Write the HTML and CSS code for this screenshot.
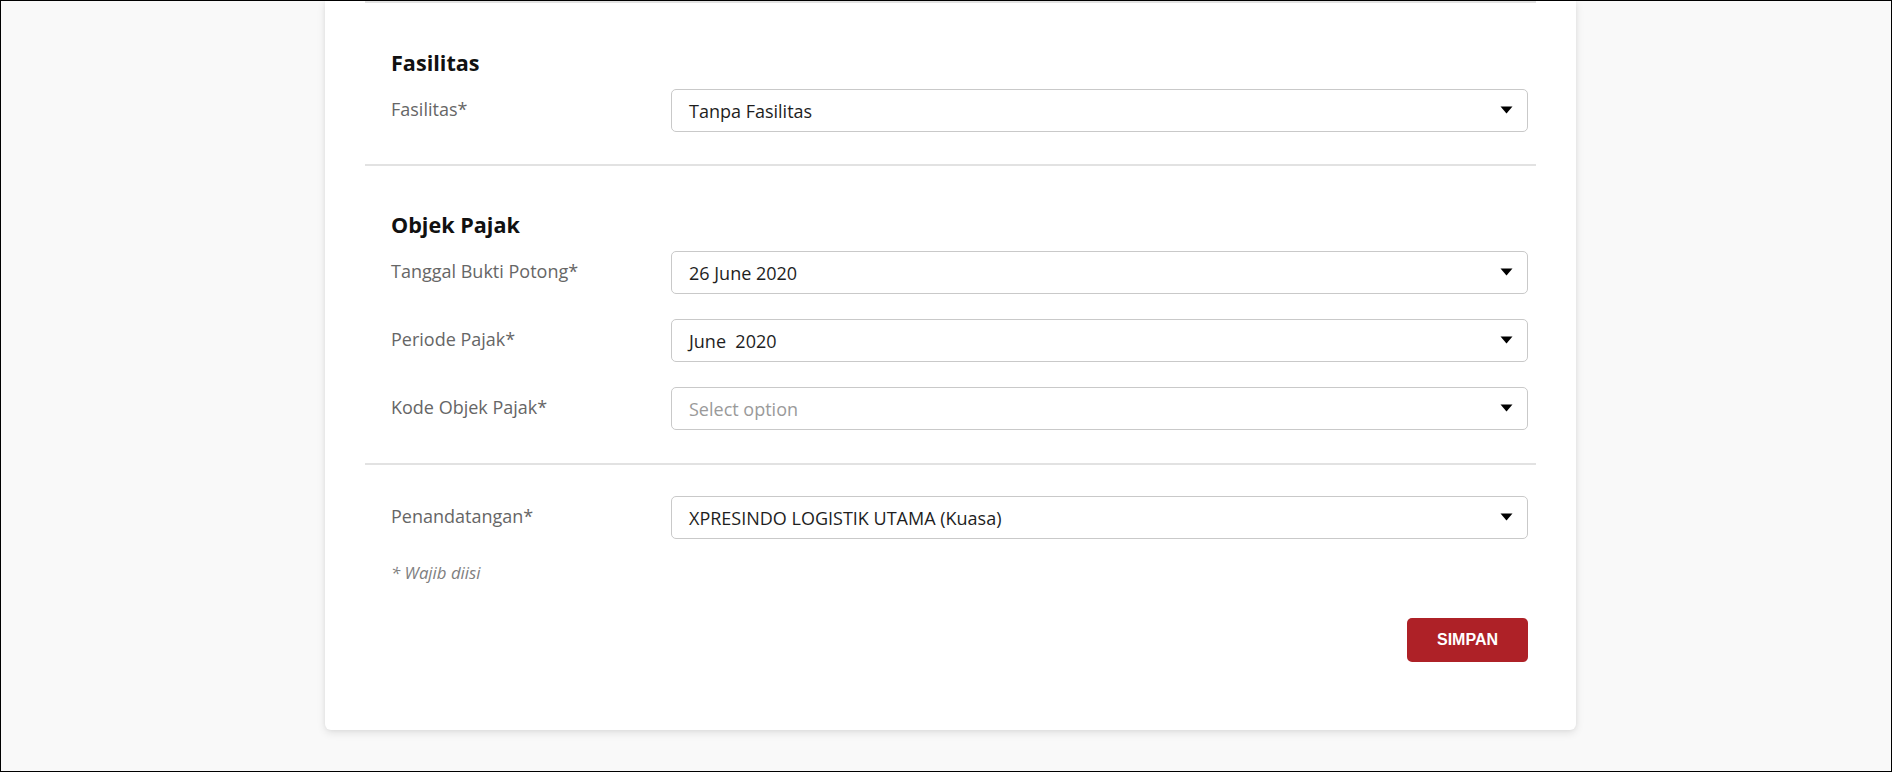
FILE: index.html
```html
<!DOCTYPE html>
<html lang="id">
<head>
<meta charset="utf-8">
<title>Bukti Potong</title>
<link rel="stylesheet" href="styles.css">
</head>
<body>
<div class="frame">
  <div class="card">
    <hr class="divider">
    <section class="section">
      <h2 class="section-title">Fasilitas</h2>
      <div class="field-list">
        <div class="field">
          <label class="field-label">Fasilitas*</label>
          <div class="select">
            <span class="select-value">Tanpa Fasilitas</span>
            <svg class="caret" width="13" height="8" viewBox="0 0 13 8"><path d="M0.5 0.5 H12.5 L6.5 7.5 Z" fill="#000"/></svg>
          </div>
        </div>
      </div>
    </section>
    <hr class="divider">
    <section class="section section-tax">
      <h2 class="section-title">Objek Pajak</h2>
      <div class="field-list">
        <div class="field">
          <label class="field-label">Tanggal Bukti Potong*</label>
          <div class="select">
            <span class="select-value">26 June 2020</span>
            <svg class="caret" width="13" height="8" viewBox="0 0 13 8"><path d="M0.5 0.5 H12.5 L6.5 7.5 Z" fill="#000"/></svg>
          </div>
        </div>
        <div class="field">
          <label class="field-label">Periode Pajak*</label>
          <div class="select">
            <span class="select-value">June  2020</span>
            <svg class="caret" width="13" height="8" viewBox="0 0 13 8"><path d="M0.5 0.5 H12.5 L6.5 7.5 Z" fill="#000"/></svg>
          </div>
        </div>
        <div class="field">
          <label class="field-label">Kode Objek Pajak*</label>
          <div class="select">
            <span class="select-value placeholder">Select option</span>
            <svg class="caret" width="13" height="8" viewBox="0 0 13 8"><path d="M0.5 0.5 H12.5 L6.5 7.5 Z" fill="#000"/></svg>
          </div>
        </div>
      </div>
    </section>
    <hr class="divider">
    <section class="section section-last">
      <div class="field-list">
        <div class="field">
          <label class="field-label">Penandatangan*</label>
          <div class="select">
            <span class="select-value">XPRESINDO LOGISTIK UTAMA (Kuasa)</span>
            <svg class="caret" width="13" height="8" viewBox="0 0 13 8"><path d="M0.5 0.5 H12.5 L6.5 7.5 Z" fill="#000"/></svg>
          </div>
        </div>
      </div>
      <p class="note">* Wajib diisi</p>
      <div class="actions">
        <button class="btn-primary" type="button">SIMPAN</button>
      </div>
    </section>
  </div>
</div>
</body>
</html>
```
FILE: styles.css
```css
html, body {
  margin: 0;
  padding: 0;
}

body {
  font-family: "Open Sans", "Noto Sans", sans-serif;
  background: #f9f9f9;
}

.frame {
  box-sizing: border-box;
  height: 772px;
  border: 1px solid #000;
  background: #f9f9f9;
  overflow: hidden;
}

.card {
  width: 1251px;
  margin-left: 324px;
  box-sizing: border-box;
  padding: 0 40px;
  background: #fff;
  border-radius: 0 0 6px 6px;
  box-shadow: 0 3px 8px rgba(0, 0, 0, 0.1), 0 0 4px rgba(0, 0, 0, 0.05);
}

.divider {
  margin: 0;
  border: 0;
  height: 2px;
  background: #e2e2e2;
}

.section {
  padding: 45px 8px 32.5px 26px;
}

.section-tax {
  padding-top: 44px;
  padding-bottom: 33px;
}

.section-last {
  padding-top: 31px;
  padding-bottom: 68px;
}

.section-title {
  margin: 0 0 10.5px;
  font-size: 21.6px;
  line-height: 30px;
  font-weight: 700;
  color: #111;
}

.field-list {
  display: flex;
  flex-direction: column;
  gap: 25px;
}

.field {
  display: flex;
  align-items: center;
}

.field-label {
  width: 280px;
  flex: none;
  font-size: 18px;
  line-height: 24px;
  color: #666;
  margin-top: -2px;
}

.select {
  flex: 1;
  height: 43px;
  box-sizing: border-box;
  border: 1px solid #c9c9c9;
  border-radius: 5px;
  display: flex;
  align-items: center;
  justify-content: space-between;
  padding: 0 14px 0 17px;
}

.select-value {
  font-size: 18px;
  line-height: 24px;
  color: #1e1e1e;
  white-space: pre;
  margin-top: 1px;
}

.select-value.placeholder {
  color: #9a9a9a;
}

.caret {
  display: block;
  flex: none;
}

.note {
  margin: 22px 0 0;
  font-size: 16.8px;
  line-height: 24px;
  font-style: italic;
  color: #808080;
}

.actions {
  display: flex;
  justify-content: flex-end;
  margin-top: 33px;
}

.btn-primary {
  width: 121px;
  height: 44px;
  border: 0;
  border-radius: 5px;
  background: #ae2127;
  color: #fff;
  font-family: "Liberation Sans", Arial, sans-serif;
  font-weight: 700;
  font-size: 16px;
  cursor: pointer;
}
```
